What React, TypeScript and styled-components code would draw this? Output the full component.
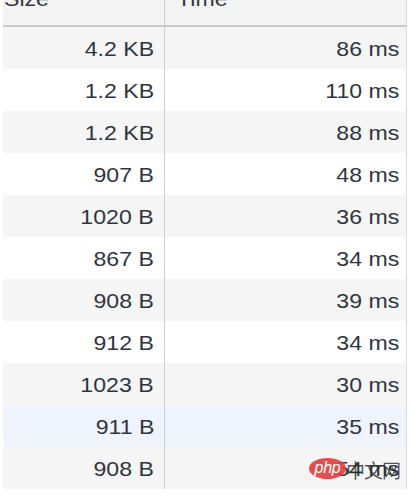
import React from "react";
import styled, { createGlobalStyle } from "styled-components";

const Global = createGlobalStyle`
  html, body { margin: 0; padding: 0; background: #ffffff; }
  body { font-family: "Liberation Sans", Arial, sans-serif; }
`;

const Page = styled.div`
  position: relative;
  width: 410px;
  height: 501px;
  overflow: hidden;
  padding-left: 3px;
  box-sizing: border-box;
  background: #ffffff;
`;

const Table = styled.div`
  display: grid;
  grid-template-columns: 162px 242px;
  width: 404px;
`;

const HeadCell = styled.div<{ $last?: boolean }>`
  height: 27px;
  box-sizing: border-box;
  overflow: hidden;
  display: flex;
  align-items: flex-end;
  padding: 0 0 16px ${(p) => (p.$last ? "12px" : "1px")};
  background: #f3f3f3;
  border-bottom: 2px solid #c8c8c8;
  border-right: ${(p) => (p.$last ? "1px solid #dcdcdc" : "1px solid #cfcfcf")};
  line-height: 21px;
  font-size: 21px;
  color: #333840;
`;

const Cell = styled.div<{ $tone: "gray" | "white" | "blue"; $last?: boolean }>`
  height: 42px;
  box-sizing: border-box;
  line-height: 42px;
  padding-top: 1px;
  font-size: 21px;
  color: #2f3540;
  text-align: right;
  padding-right: ${(p) => (p.$last ? "7px" : "10px")};
  white-space: nowrap;
  background: ${(p) =>
    p.$tone === "gray" ? "#f5f5f5" : p.$tone === "blue" ? "#eef3fc" : "#ffffff"};
  border-right: ${(p) => (p.$last ? "1px solid #dcdcdc" : "1px solid #cfcfcf")};
`;

const Wide = styled.span`
  display: inline-block;
  line-height: 40px;
  transform: scaleX(1.1);
  transform-origin: right center;
`;

const WideLeft = styled.span`
  display: inline-block;
  transform: scaleX(1.1);
  transform-origin: left center;
`;

const Watermark = styled.div`
  position: absolute;
  left: 309px;
  top: 455px;
  display: flex;
  align-items: center;
  gap: 0px;
  pointer-events: none;
`;

const PhpBadge = styled.div`
  width: 37px;
  height: 21px;
  border-radius: 50%;
  background: rgba(228, 62, 62, 0.92);
  color: #ffffff;
  font-family: "Liberation Sans", Arial, sans-serif;
  font-style: italic;
  font-size: 16px;
  line-height: 19px;
  text-align: center;
  letter-spacing: -0.3px;
`;

const CnText = styled.div`
  font-family: "Noto Sans CJK SC", sans-serif;
  font-size: 19px;
  line-height: 22px;
  margin-top: 4px;
  color: rgba(40, 40, 40, 0.8);
  letter-spacing: -1px;
`;

const rows: { size: string; time: string; tone: "gray" | "white" | "blue" }[] = [
  { size: "4.2 KB", time: "86 ms", tone: "gray" },
  { size: "1.2 KB", time: "110 ms", tone: "white" },
  { size: "1.2 KB", time: "88 ms", tone: "gray" },
  { size: "907 B", time: "48 ms", tone: "white" },
  { size: "1020 B", time: "36 ms", tone: "gray" },
  { size: "867 B", time: "34 ms", tone: "white" },
  { size: "908 B", time: "39 ms", tone: "gray" },
  { size: "912 B", time: "34 ms", tone: "white" },
  { size: "1023 B", time: "30 ms", tone: "gray" },
  { size: "911 B", time: "35 ms", tone: "blue" },
  { size: "908 B", time: "54 ms", tone: "gray" },
];

export default function App() {
  return (
    <>
      <Global />
      <Page>
        <Table>
          <HeadCell>
            <WideLeft>Size</WideLeft>
          </HeadCell>
          <HeadCell $last>
            <WideLeft>Time</WideLeft>
          </HeadCell>
          {rows.map((r, i) => (
            <React.Fragment key={i}>
              <Cell $tone={r.tone}>
                <Wide>{r.size}</Wide>
              </Cell>
              <Cell $tone={r.tone} $last>
                <Wide>{r.time}</Wide>
              </Cell>
            </React.Fragment>
          ))}
        </Table>
        <Watermark>
          <PhpBadge>php</PhpBadge>
          <CnText>中文网</CnText>
        </Watermark>
      </Page>
    </>
  );
}
